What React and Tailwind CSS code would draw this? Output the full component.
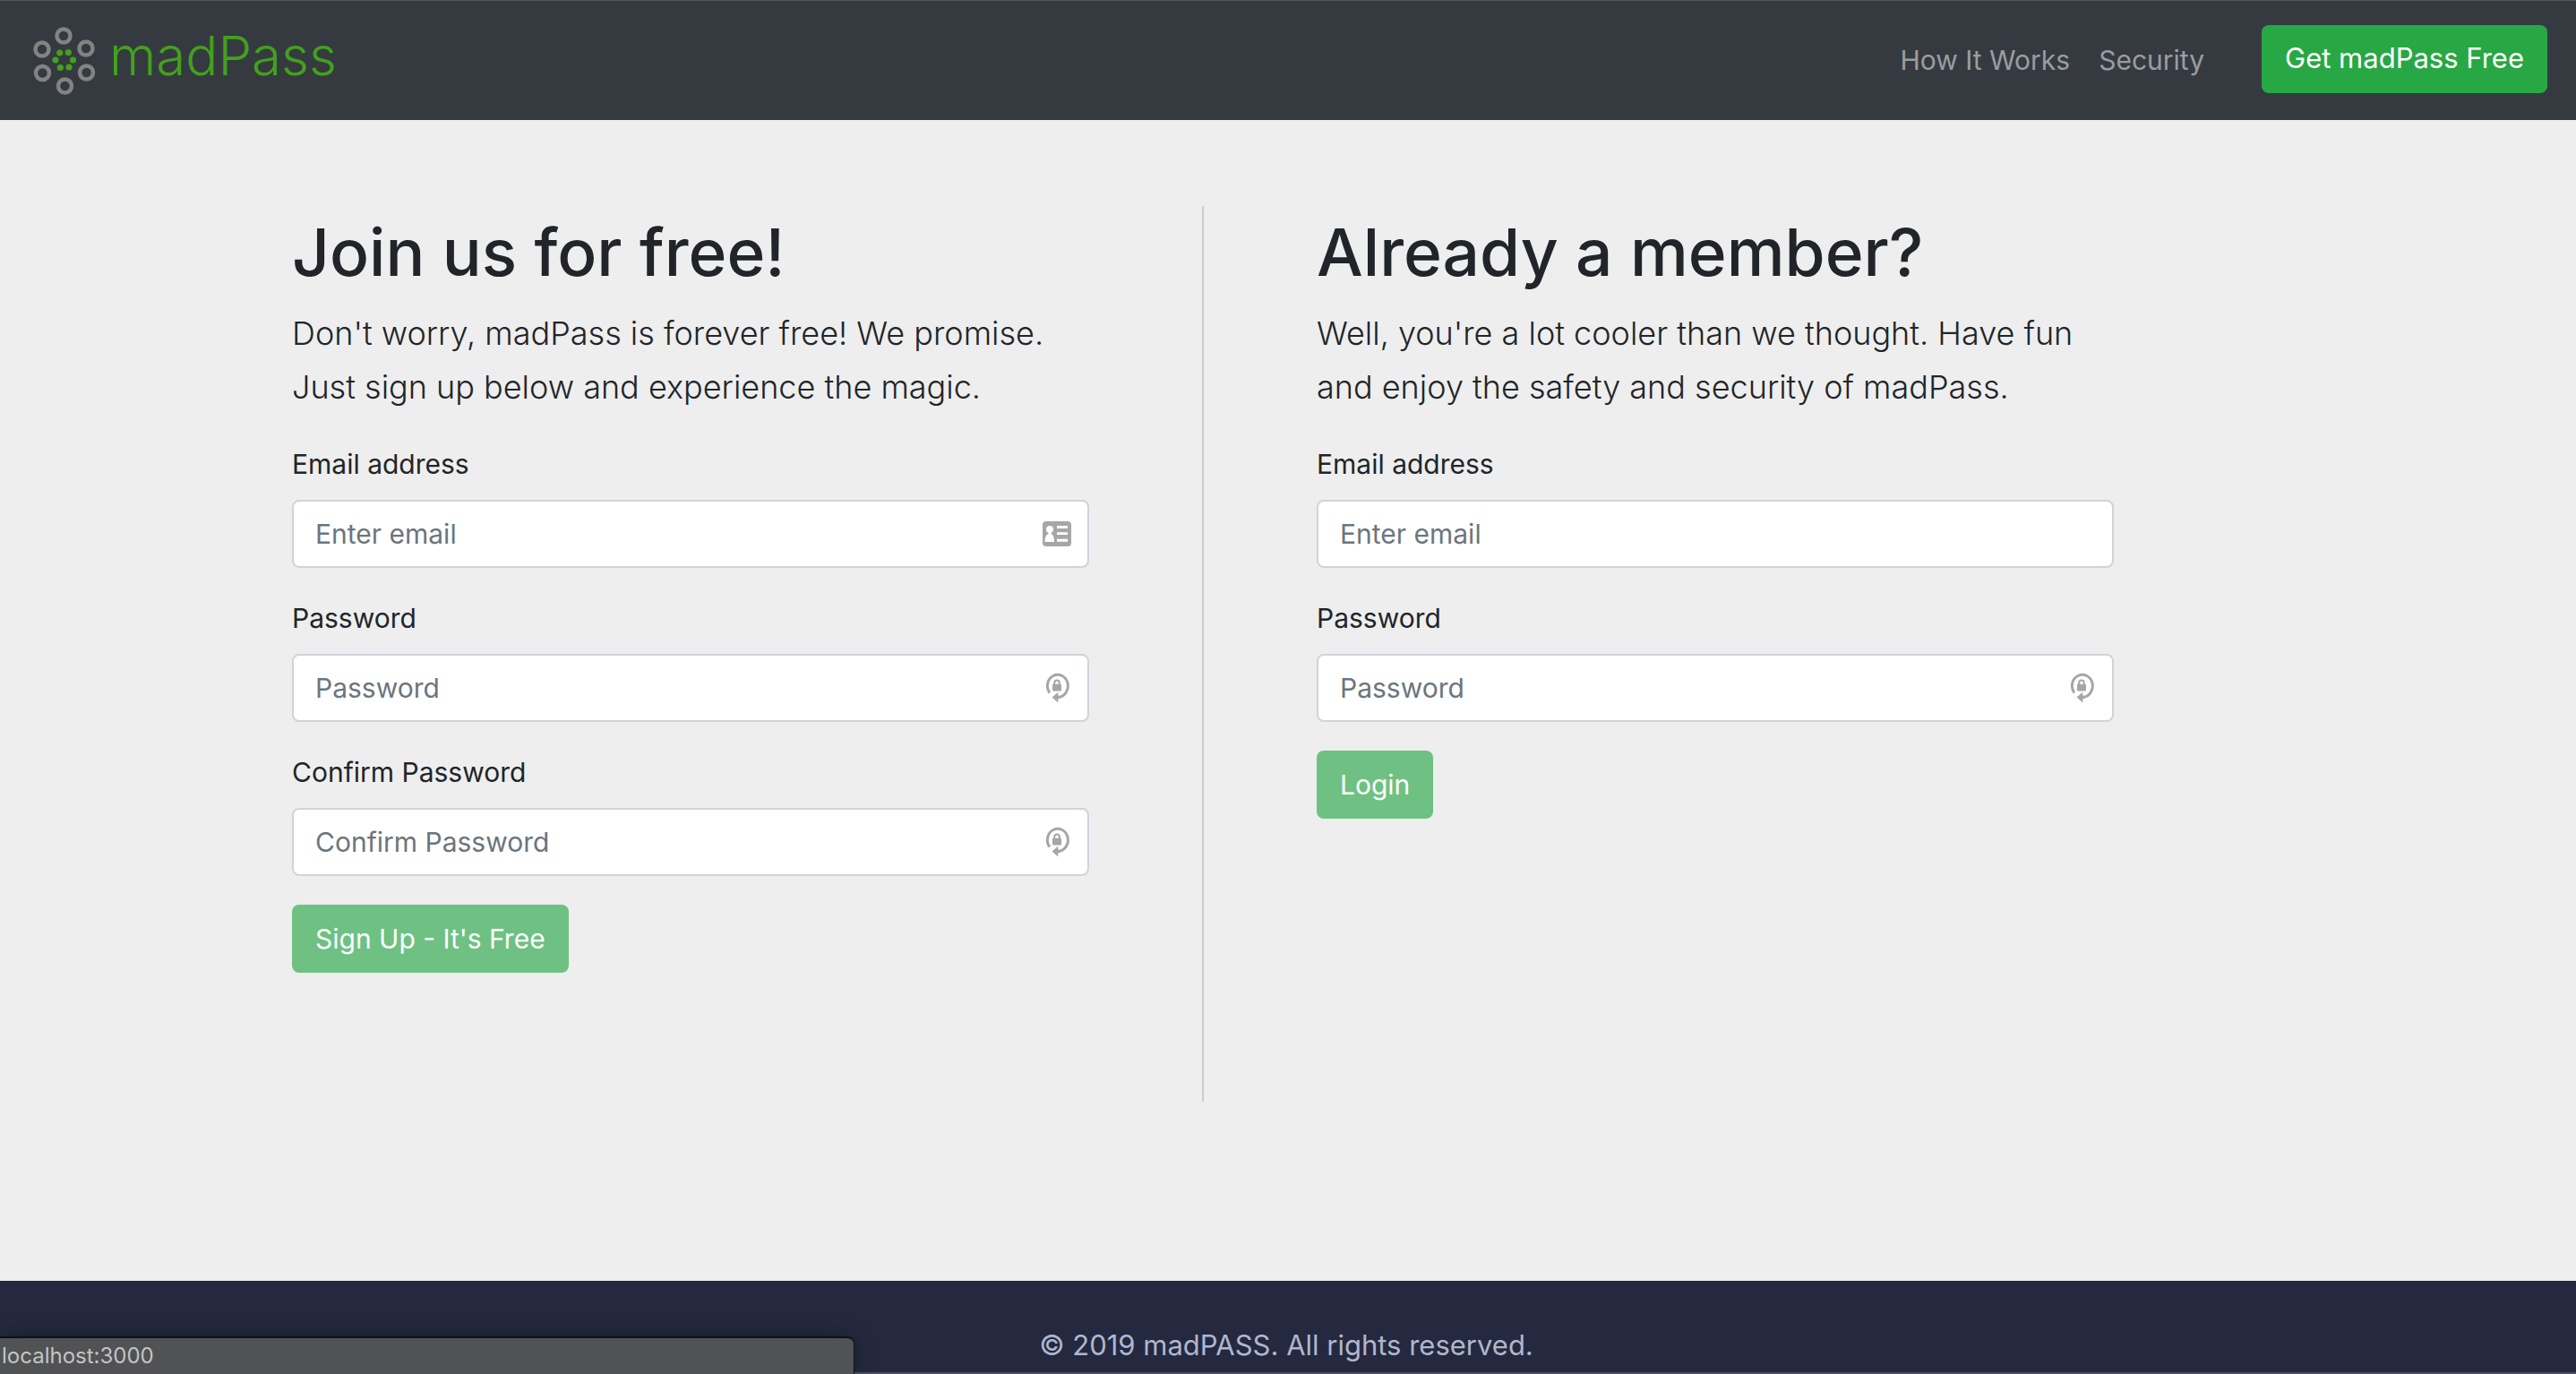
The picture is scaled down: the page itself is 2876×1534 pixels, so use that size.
const outerRings = [
  [41, 11],
  [66, 25],
  [66.5, 52],
  [42.5, 67],
  [17.5, 52.5],
  [17, 26],
];

const innerDots = [
  [36.7, 30],
  [46.3, 29.5],
  [51.5, 38],
  [47, 46],
  [37.3, 46.5],
  [32, 38],
];

function LogoMark() {
  return (
    <svg viewBox="0 0 84 78" className="h-[78px] w-[84px]" aria-hidden="true">
      {outerRings.map(([x, y]) => (
        <circle key={`${x}-${y}`} cx={x} cy={y} r="7.5" fill="none" stroke="#838383" strokeWidth="4.5" />
      ))}
      {innerDots.map(([x, y]) => (
        <circle key={`${x}-${y}`} cx={x} cy={y} r="3.6" fill="#43a01c" />
      ))}
    </svg>
  );
}

function ContactIcon() {
  return (
    <svg viewBox="0 0 32 28" className="h-7 w-8" aria-hidden="true">
      <rect width="32" height="28" rx="4" fill="#a6a6a6" />
      <circle cx="8" cy="9" r="4" fill="#fff" />
      <path d="M6.5 11h3v3c2.300 1 3.500 3.500 3.500 9H2.500c0-5.500 1.700-8 4-9z" fill="#fff" />
      <path d="M16 5h12v3H16zM16 12.200h12v2.800H16zM16 19.800h12v3H16z" fill="#fff" />
    </svg>
  );
}

function LockCycleIcon() {
  return (
    <svg viewBox="0 0 32 36" className="h-9 w-8" aria-hidden="true">
      <path d="M7.800 23.500A11.500 12.500 0 1 1 17 28.300" fill="none" stroke="#a6a6a6" strokeWidth="3" />
      <path d="M10.500 28.500l6.800-5.800v4.100h2v3.400h-2v4.300z" fill="#a6a6a6" />
      <path d="M13.200 14v-1.500a2.800 3 0 0 1 5.600 0V14" fill="none" stroke="#a6a6a6" strokeWidth="2" />
      <rect x="11" y="13.700" width="10" height="7.800" rx="1" fill="#a6a6a6" />
    </svg>
  );
}

function Field({ id, label, type, placeholder, icon }) {
  return (
    <div className="mb-8">
      <label htmlFor={id} className="mb-4 block leading-[48px]">
        {label}
      </label>
      <div className="relative">
        <input
          id={id}
          type={type}
          placeholder={placeholder}
          className="block h-[76px] w-full rounded-lg border-2 border-[#ced4da] bg-white px-6 text-[#495057] placeholder:text-[#6c757d] focus:outline-none"
        />
        {icon && (
          <span className="pointer-events-none absolute inset-y-0 right-5 flex items-center">{icon}</span>
        )}
      </div>
    </div>
  );
}

function Panel({ title, lines, action, children }) {
  return (
    <section className="w-5/12 px-[30px]">
      <h1 className="mb-3 pt-1 text-[73px] leading-[96px] font-medium whitespace-nowrap">{title}</h1>
      <p className="mb-8 text-[36px] leading-[60px] font-light whitespace-nowrap">
        {lines[0]}
        <br />
        {lines[1]}
      </p>
      <form onSubmit={(e) => e.preventDefault()}>
        {children}
        <button type="submit" className="h-[76px] rounded-lg bg-[#6ec182] px-[26px] text-white">
          {action}
        </button>
      </form>
    </section>
  );
}

export default function App() {
  return (
    <div className="relative flex min-h-screen flex-col overflow-x-hidden bg-[#eeeeee] font-['Inter',sans-serif] text-[30px] text-[#212529]">
      <header className="flex h-[134px] items-center justify-between border-t border-[#55585b] bg-[#353a41] pr-8 pb-1 pl-[30px]">
        <a href="#home" className="flex items-center pt-1">
          <LogoMark />
          <span className="-mt-3 ml-2 text-[60px] leading-none font-light text-[#43a01c]">madPass</span>
        </a>
        <nav className="flex items-center text-[#9a9d9f]">
          <a href="#how" className="mr-8 pt-1">How It Works</a>
          <a href="#security" className="mr-16 pt-1">Security</a>
          <button type="button" className="h-[76px] rounded-lg bg-[#28a745] px-[26px] text-[31px] text-white">
            Get madPass Free
          </button>
        </nav>
      </header>

      <main className="flex-1 pt-24 pr-1">
        <div className="mx-auto flex max-w-[2280px]">
          <Panel
            title="Join us for free!"
            lines={["Don't worry, madPass is forever free! We promise.", "Just sign up below and experience the magic."]}
            action="Sign Up - It's Free"
          >
            <Field id="join-email" label="Email address" type="email" placeholder="Enter email" icon={<ContactIcon />} />
            <Field id="join-password" label="Password" type="password" placeholder="Password" icon={<LockCycleIcon />} />
            <Field id="join-confirm" label="Confirm Password" type="password" placeholder="Confirm Password" icon={<LockCycleIcon />} />
          </Panel>
          <div className="flex w-[194px] justify-center">
            <div className="h-[1000px] w-0.5 bg-[#cccccc]" />
          </div>
          <Panel
            title="Already a member?"
            lines={["Well, you're a lot cooler than we thought. Have fun", "and enjoy the safety and security of madPass."]}
            action="Login"
          >
            <Field id="login-email" label="Email address" type="email" placeholder="Enter email" />
            <Field id="login-password" label="Password" type="password" placeholder="Password" icon={<LockCycleIcon />} />
          </Panel>
        </div>
      </main>

      <footer className="h-[104px] border-b-2 border-[#4c5064] bg-[#24293f] pt-12 pr-1 text-center text-[31px] leading-[48px] text-[#b0b6ce]">
        © 2019 madPASS. All rights reserved.
      </footer>

      <div className="absolute bottom-0 left-0 flex h-[42px] w-[954px] items-center rounded-tr-lg border-t-2 border-r border-[#0f1118] bg-[#515253] pl-0.5 text-[24px] text-[#c4c4c4] shadow-[0_0_24px_rgba(0,0,0,0.3)]">
        localhost:3000
      </div>
    </div>
  );
}
